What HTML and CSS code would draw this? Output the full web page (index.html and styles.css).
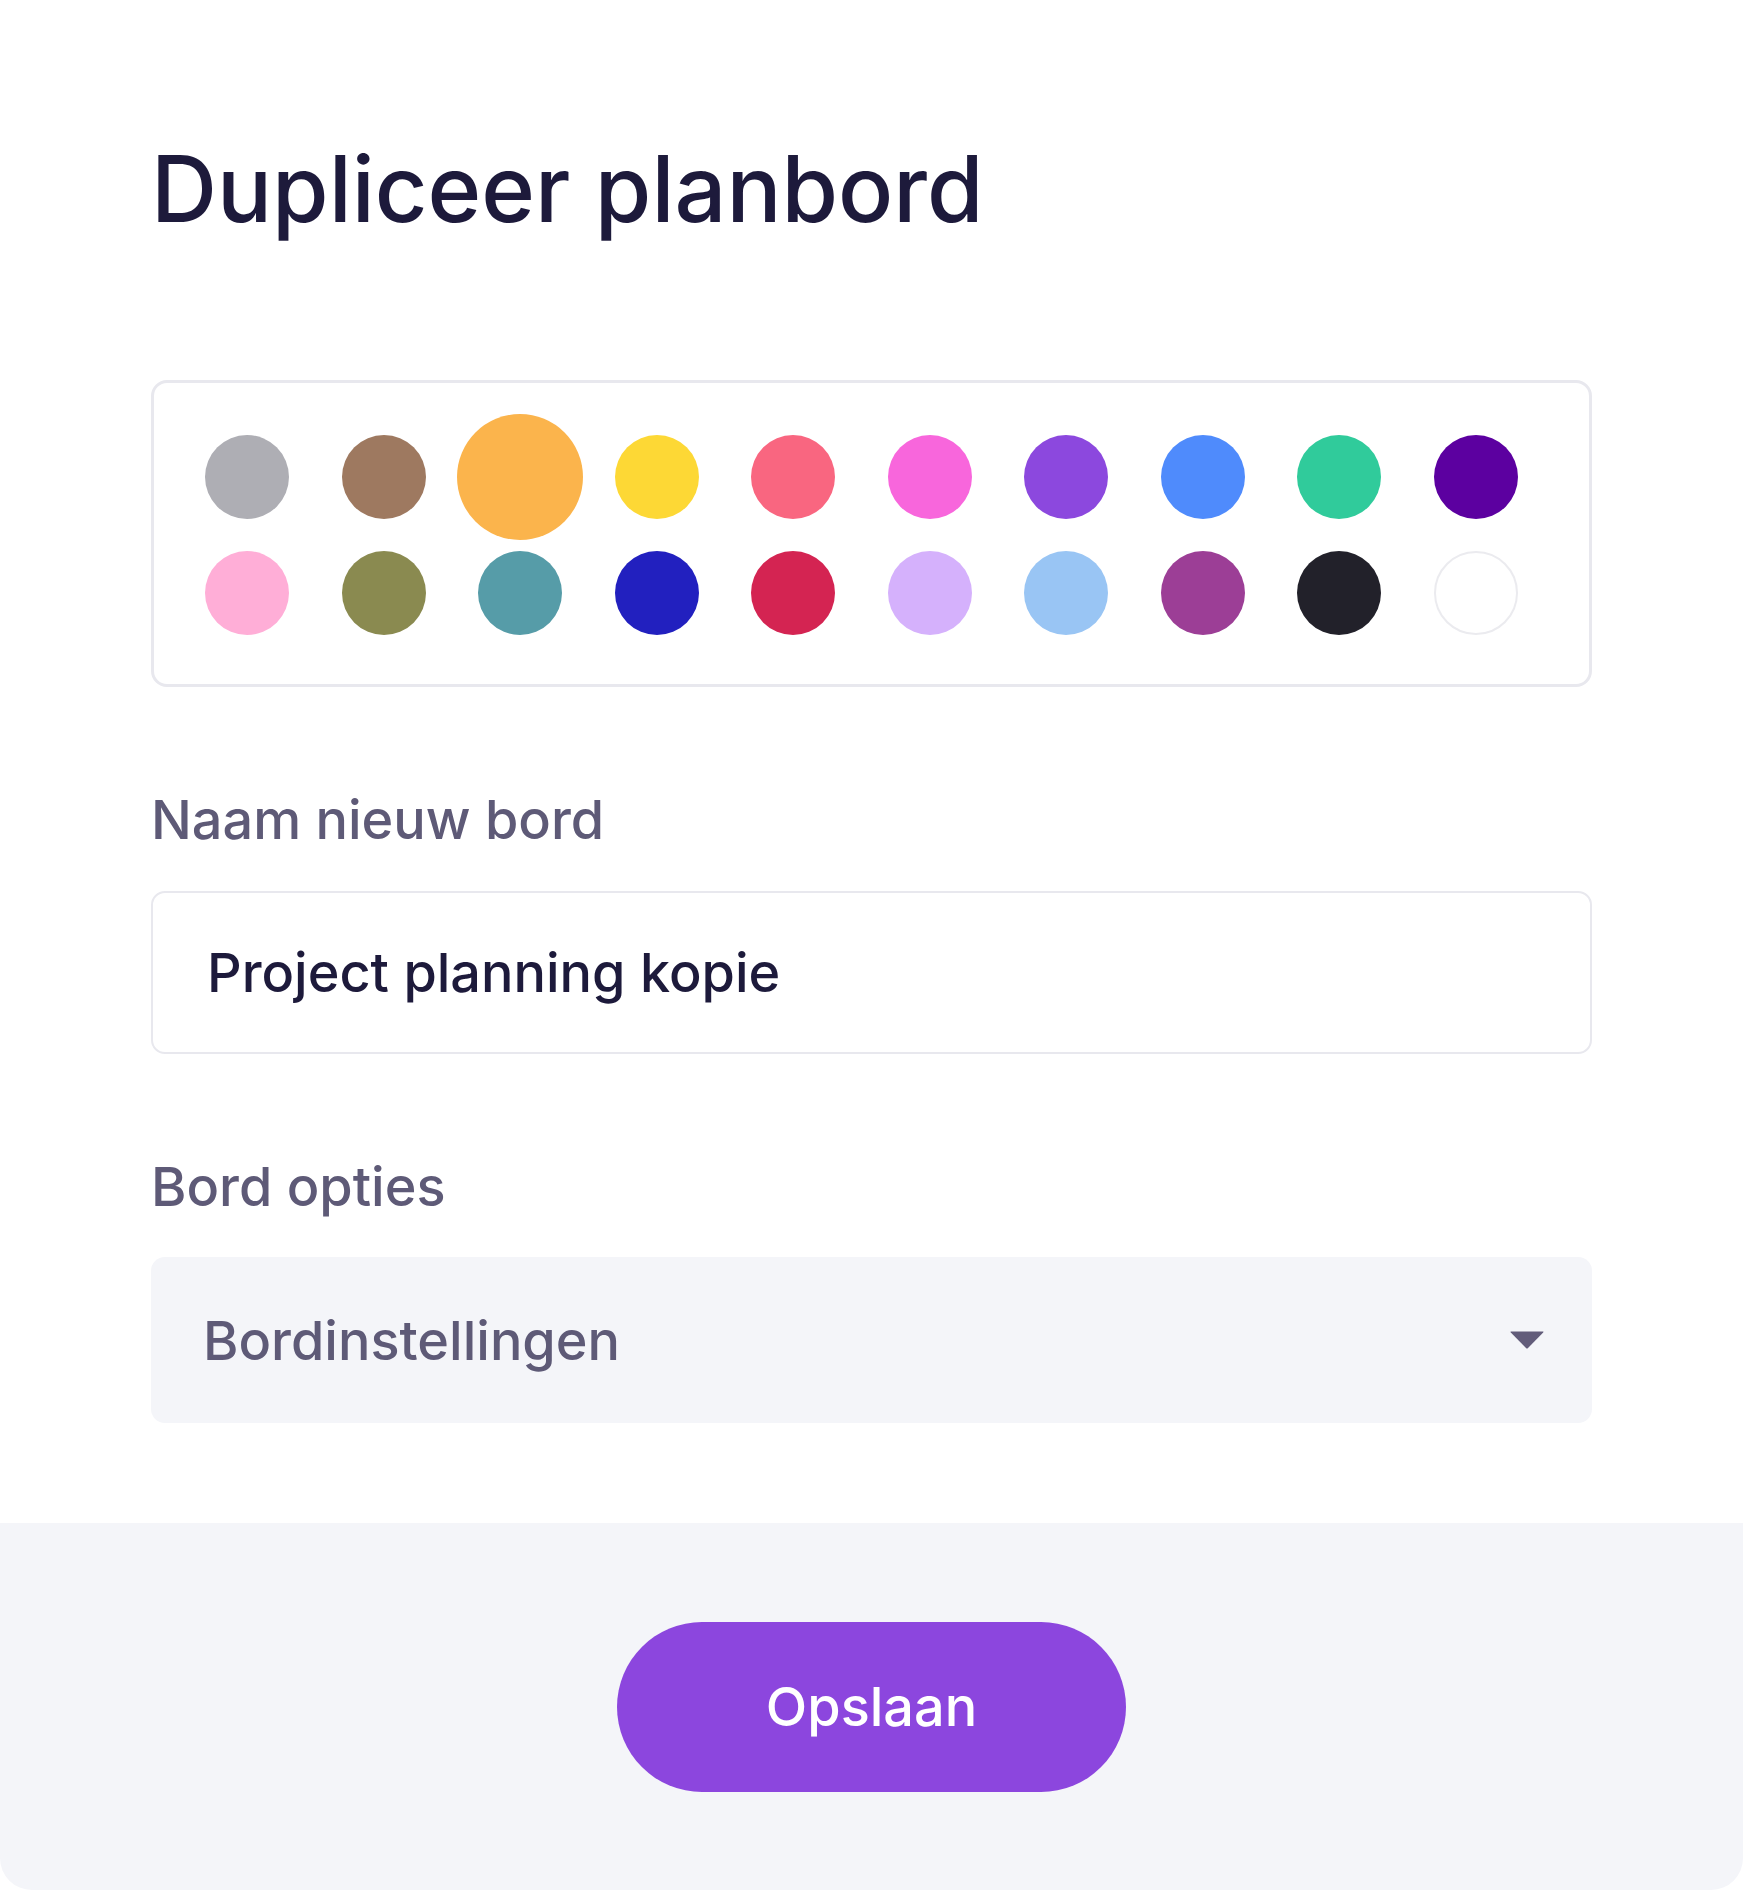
FILE: index.html
```html
<!DOCTYPE html>
<html lang="nl">

<head>
    <meta charset="UTF-8">
    <meta name="viewport" content="width=device-width, initial-scale=1.0">
    <title>Dupliceer planbord</title>
    <link rel="stylesheet" href="styles.css">
</head>

<body>
    <div class="modal">
        <div class="modal-body">
            <h1 class="modal-title">Dupliceer planbord</h1>

            <!-- kleurkeuze -->
            <div class="color-picker">
                <span class="swatch gray"></span>
                <span class="swatch brown"></span>
                <span class="swatch orange selected"></span>
                <span class="swatch yellow"></span>
                <span class="swatch coral"></span>
                <span class="swatch pink"></span>
                <span class="swatch purple"></span>
                <span class="swatch blue"></span>
                <span class="swatch green"></span>
                <span class="swatch indigo"></span>
                <span class="swatch light-pink"></span>
                <span class="swatch olive"></span>
                <span class="swatch teal"></span>
                <span class="swatch navy"></span>
                <span class="swatch crimson"></span>
                <span class="swatch lavender"></span>
                <span class="swatch sky"></span>
                <span class="swatch plum"></span>
                <span class="swatch black"></span>
                <span class="swatch white"></span>
            </div>

            <div class="form-group">
                <label for="boardName">Naam nieuw bord</label>
                <input type="text" id="boardName" class="text-input" value="Project planning kopie">
            </div>

            <div class="form-group">
                <label>Bord opties</label>
                <div class="select-box">
                    <span>Bordinstellingen</span>
                    <svg class="caret" width="34" height="18" viewBox="0 0 34 18">
                        <path d="M1 0.5 H33 Q34 0.5 33.2 1.4 L18 17 Q17 18 16 17 L0.8 1.4 Q0 0.5 1 0.5 Z" fill="#625c7a" />
                    </svg>
                </div>
            </div>
        </div>

        <div class="modal-footer">
            <button type="button" class="save-button">Opslaan</button>
        </div>
    </div>
</body>

</html>
```

FILE: styles.css
```css
body {
    margin: 0;
    padding: 0;
    background: #fff;
    font-family: Inter, "Noto Sans", sans-serif;
}

.modal {
    width: 1743px;
    height: 1890px;
    background: #fff;
    border-radius: 32px;
    overflow: hidden;
    display: flex;
    flex-direction: column;
}

.modal-body {
    padding: 134px 151px 100px;
}

.modal-title {
    margin: 0 0 136px;
    font-size: 91.5px;
    line-height: 1.2;
    font-weight: 500;
    color: #1d1a3b;
}

.color-picker {
    border: 3px solid #e8e8ee;
    border-radius: 16px;
    padding: 52px 51px 49px;
    display: flex;
    flex-wrap: wrap;
    column-gap: 52.5px;
    row-gap: 32px;
}

.swatch {
    width: 84px;
    height: 84px;
    border-radius: 50%;
    box-sizing: border-box;
}

.swatch.selected {
    transform: scale(1.5);
}

.gray { background: #aeaeb4; }
.brown { background: #9e7960; }
.orange { background: #fbb44c; }
.yellow { background: #fdd835; }
.coral { background: #f96680; }
.pink { background: #f866dc; }
.purple { background: #8c48de; }
.blue { background: #4f8bfc; }
.green { background: #30cb9b; }
.indigo { background: #5c00a0; }
.light-pink { background: #ffaed7; }
.olive { background: #8a8a50; }
.teal { background: #569ca8; }
.navy { background: #2220bf; }
.crimson { background: #d42452; }
.lavender { background: #d5b1fc; }
.sky { background: #99c5f4; }
.plum { background: #9c3e96; }
.black { background: #22212a; }
.white { background: #fff; border: 2px solid #ebebef; }

.form-group {
    margin-top: 101px;
}

.form-group label {
    display: block;
    margin-bottom: 38px;
    font-size: 54px;
    line-height: 1.2;
    font-weight: 500;
    color: #5e5a77;
}

.text-input {
    display: block;
    width: 100%;
    height: 163px;
    box-sizing: border-box;
    padding: 0 54px;
    border: 2px solid #e8e8ee;
    border-radius: 14px;
    font-family: inherit;
    font-size: 54px;
    font-weight: 500;
    color: #1d1a3b;
    background: #fff;
}

.text-input:focus {
    outline: none;
}

.select-box {
    height: 166px;
    box-sizing: border-box;
    padding: 0 48px 0 52px;
    background: #f4f5f9;
    border-radius: 14px;
    display: flex;
    align-items: center;
    justify-content: space-between;
    font-size: 54px;
    font-weight: 500;
    color: #5e5a77;
}

.modal-footer {
    flex: 1;
    background: #f4f5f9;
    display: flex;
    justify-content: center;
    align-items: center;
}

.save-button {
    width: 509px;
    height: 170px;
    border: none;
    border-radius: 85px;
    background: #8c46de;
    color: #fff;
    font-family: inherit;
    font-size: 54px;
    font-weight: 500;
    cursor: pointer;
}
```
